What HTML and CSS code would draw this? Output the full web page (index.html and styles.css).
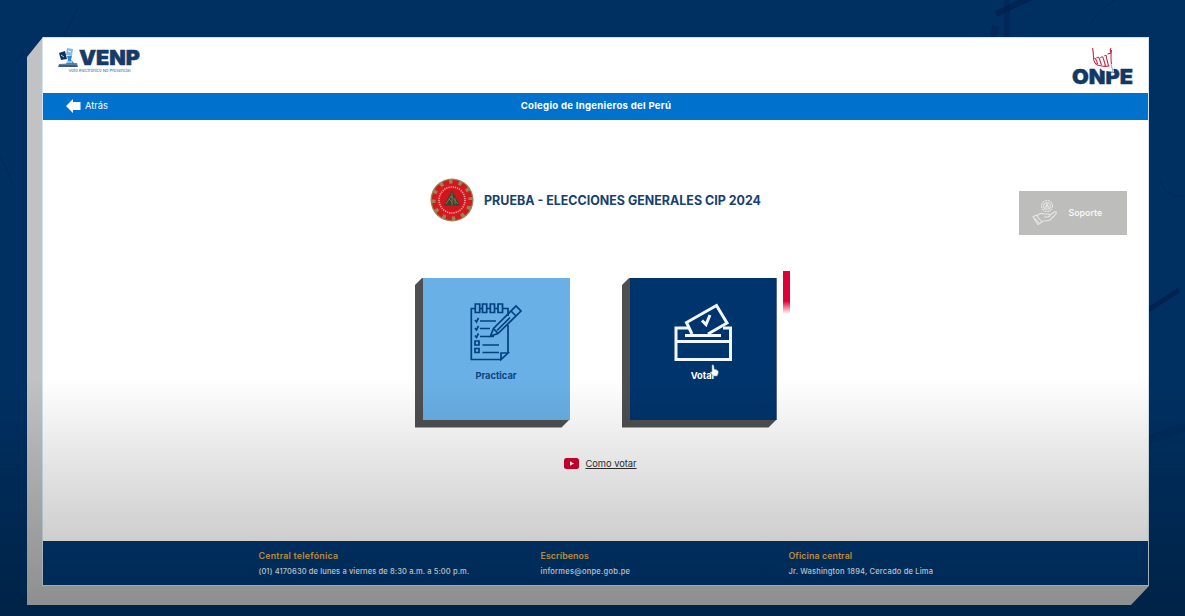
FILE: index.html
```html
<!DOCTYPE html>
<html lang="es">
<head>
<meta charset="utf-8">
<title>VENP - ONPE</title>
<link rel="stylesheet" href="styles.css">
</head>
<body>
<svg class="backdrop" viewBox="0 0 1185 616" aria-hidden="true">
  <g fill="none" stroke="#001d4b">
    <path d="M996 14L1044-9" stroke-width="6" opacity=".6"/>
    <path d="M1007 0V37" stroke-width="6" opacity=".35"/>
    <path d="M993 37L996 26" stroke-width="7" opacity=".4"/>
    <path d="M1090 24Q1101 9 1115 0" stroke-width="2" opacity=".3"/>
    <path d="M1148 310L1179 290" stroke-width="5" opacity=".75"/>
    <path d="M1149 440L1185 427" stroke-width="9" opacity=".2"/>
    <path d="M1160 180Q1166 198 1185 196" stroke-width="2" opacity=".2"/>
    <path d="M0 157Q7 168 12 184M14 62L25 53M64 35L78 7" stroke-width="2" opacity=".25"/>
  </g>
</svg>
<div class="frame">
  <div class="screen">
    <header class="header">
      <svg class="venp" viewBox="0 0 84 30" role="img" aria-label="VENP">
        <path d="M1 17L19 16L20 20H0Z" fill="#5f7fa5"/>
        <path d="M1 19H19" stroke="#173b69"/>
        <path d="M1 6L7 4L9 12L3 13Z" fill="#12305c"/>
        <path d="M3 8L6 10" stroke="#a8cdeb"/>
        <path d="M9 1L15 2L14 9L8 8Z" fill="#82bdea"/>
        <path d="M10 4L13 5" stroke="#fff"/>
        <path d="M9 9H14L13 13L17 17H8L10 13Z" fill="#2f86cc"/>
        <path d="M9 15H14" stroke="#fff"/>
        <text class="venp-name" x="21" y="17.800" textLength="61" lengthAdjust="spacingAndGlyphs">VENP</text>
        <text class="venp-sub" x="10.500" y="25.300" textLength="62" lengthAdjust="spacingAndGlyphs">Voto Electrónico No Presencial</text>
      </svg>
      <svg class="onpe" viewBox="0 0 66 46" role="img" aria-label="ONPE">
        <text class="onpe-name" x="2" y="36.800" textLength="61" lengthAdjust="spacingAndGlyphs">ONPE</text>
        <path d="M30 20L43 19L44 25L32 23.500Z" fill="#fff"/>
        <path d="M22.500 1Q23.500 5 23.500 10Q23.500 16 27.500 18M24.500 11Q26.500 12 27.500 17M26.500 11Q28.500 9 29.500 12L31.500 18M30.500 11Q32.500 8 33.500 12L35.500 19M34.500 9Q36.500 7 36.500 11L38.500 19M37.500 7L41 6Q39.500 3 41 1M41.500 3Q40.500 12 41.500 17M27.500 18Q33.500 20 39.500 19" fill="none" stroke="#c82c4b" stroke-width="1.1"/>
        <path d="M41 17L43 25" stroke="#9ba9b9"/>
      </svg>
    </header>
    <nav class="bar">
      <a class="back">
        <svg class="arrow" viewBox="0 0 15 14"><path d="M0 7L7 0V3H14.500V11H7V14Z" fill="#fff"/></svg>
        <span>Atrás</span>
      </a>
      <span class="org">Colegio de Ingenieros del Perú</span>
    </nav>
    <main class="main">
      <section class="center">
        <div class="title">
          <svg class="crest" viewBox="0 0 44 44">
            <circle cx="22" cy="22" r="21.500" fill="#9a8456"/>
            <circle cx="22" cy="22" r="18" fill="none" stroke="#cf1a20" stroke-width="4.500" stroke-dasharray="6 3.425"/>
            <circle cx="22" cy="22" r="16.500" fill="#d81820"/>
            <circle cx="22" cy="22" r="13" fill="none" stroke="#f0a6a0" stroke-width="1.600" stroke-dasharray="1.200 1"/>
            <circle cx="22" cy="22" r="11" fill="#cc171c"/>
            <path d="M22 12.500L30 27.500H14Z" fill="#3c4136"/>
            <path d="M22 15V27M19 21L22 24M25 20V26M16 26L21 18L28 26" fill="none" stroke="#8d8a5c" stroke-width=".7"/>
          </svg>
          <h1>PRUEBA - ELECCIONES GENERALES CIP 2024</h1>
        </div>
        <div class="cards">
          <a class="card"><div class="face light">
            <svg class="icon" viewBox="0 0 54 60" fill="none" stroke="#00417e" stroke-width="1.700">
              <path d="M5.300 5.500H1.300V56.500H31L38 50V22M32.500 5.500H38V13M9.700 5.500H12.500M16.700 5.500H20.300M24.500 5.500H28M31 56.500V50H38Z"/>
              <path d="M5.300 1H9.700V9.500H5.300ZM12.500 1H16.700V9.500H12.500ZM20.300 1H24.500V9.500H20.300ZM28 1H32.500V9.500H28Z"/>
              <path d="M5 17L6.500 19L8.500 15M5 25L6.500 27L8.500 23M5 32.500L6.500 34.500L8.500 30.500M10 18H26M10 25.500H20M10 33.500H24M5 38H9V42H5ZM5 45.500H9V49.500H5ZM12.500 42H29M12.500 49.500H29"/>
              <path d="M20.500 33L23.500 25.500L46 3L51 8L28 30.500ZM23.500 25.500L28 30.500M41 8L46 13M27 27.500L40 14.500"/>
            </svg>
            <span>Practicar</span></div></a>
          <a class="card"><div class="face dark">
            <svg class="icon vote" viewBox="0 0 58 60" fill="none" stroke="#eff7ff" stroke-width="3">
              <path d="M18 31L12.500 19.500L42.500 2.500L53 20L34 31"/>
              <path d="M14 25H2V56.500H56.500V25H49M2 38.500H56.500M11 32.500H47"/>
              <path d="M28 17.500L32 21.500L36 12"/>
            </svg>
            <span>Votar</span>
            <svg class="cursor" viewBox="0 0 9 13"><path d="M2 1Q3 0 4 2V5L7 6Q9 7 8 10L7 12H3L0 8L2 8Z" fill="#fff" stroke="#8095ad" stroke-width=".6"/></svg>
          </div></a>
          <i class="marker"></i>
        </div>
        <a class="how">
          <svg class="play" viewBox="0 0 15 11"><rect width="15" height="11" rx="2.500" fill="#d4002f"/><path d="M6 3.300L10 5.500L6 7.700Z" fill="#fff"/></svg>
          <span>Como votar</span>
        </a>
      </section>
      <a class="support">
        <svg class="hand" viewBox="0 0 26 27" fill="none" stroke="#e6e6e6" stroke-width="1.100">
          <circle cx="15" cy="7" r="5.500" stroke-dasharray="2.200 .7"/><circle cx="15" cy="7" r="3.300"/><path d="M13.500 8L15 5L16.500 8Z"/>
          <path d="M1 18L4 16L10 23L6 25.500ZM5 17Q8 13 12 15H17Q19 17 16 18H12M17 17L22 13Q25 12 24 15L18 21Q16 22 10 22M2.500 19L7 24"/>
        </svg>
        <span>Soporte</span>
      </a>
    </main>
    <footer class="footer">
      <div class="col tel"><h2>Central telefónica</h2><p>(01) 4170630 de lunes a viernes de 8:30 a.m. a 5:00 p.m.</p></div>
      <div class="col mail"><h2>Escríbenos</h2><p>informes@onpe.gob.pe</p></div>
      <div class="col office"><h2>Oficina central</h2><p>Jr. Washington 1894, Cercado de Lima</p></div>
    </footer>
  </div>
</div>
<div class="shade"></div>
</body>
</html>
```
FILE: styles.css
```css
* { box-sizing: border-box; }
body {
  margin: 0;
  height: 616px;
  overflow: hidden;
  padding: 37px 36px 11px 27px;
  background: #003062;
  font-family: Inter, "Open Sans", sans-serif;
  position: relative;
}
svg { display: block; flex: none; }
.backdrop { position: absolute; inset: 0; width: 1185px; height: 616px; }
.frame {
  position: relative;
  height: 568px;
  padding: 1px 1px 20px 16px;
  background: #c1c2c3;
  clip-path: polygon(16px 0, 100% 0, 100% 549px, 1104px 100%, 0 100%, 0 20px);
}
.screen {
  height: 547px;
  display: flex;
  flex-direction: column;
  background: #fff;
  box-shadow: 0 0 0 1px #d3e3ef;
}
.header {
  height: 55px;
  display: flex;
  justify-content: space-between;
  padding: 9px 12px 0 15px;
}
.venp { width: 84px; height: 30px; }
.venp-name { font: 900 20px Inter, sans-serif; fill: #173b69; stroke: #173b69; stroke-width: .5; }
.venp-sub { font: 500 3.800px Inter, sans-serif; fill: #4d83ac; }
.onpe { width: 66px; height: 46px; }
.onpe-name { font: 900 20px Inter, sans-serif; fill: #123965; stroke: #123965; stroke-width: .4; }
.bar {
  height: 26.500px;
  display: grid;
  grid-template-columns: 1fr auto 1fr;
  align-items: center;
  padding: 0 22px 1px 23px;
  background: #0072ce;
  color: #fff;
}
.back { display: flex; align-items: center; gap: 4px; font-size: 9.300px; }
.arrow { width: 15px; height: 14px; }
.org { font-size: 9.600px; font-weight: 700; letter-spacing: .27px; white-space: nowrap; }
.main {
  flex: 1;
  display: grid;
  grid-template-columns: 1fr 362px 1fr;
}
.center {
  grid-column: 2;
  display: flex;
  flex-direction: column;
  align-items: center;
  padding-top: 58.500px;
}
.title { display: flex; align-items: center; gap: 10px; height: 44px; }
.crest { width: 44px; height: 44px; }
h1 { margin: 0; font-size: 12.450px; font-weight: 700; color: #173f73; white-space: nowrap; }
.cards { display: flex; gap: 52px; margin-top: 55.500px; position: relative; }
.card {
  width: 155px;
  height: 150px;
  padding: 0 0 8px 8px;
  background: #4e4f50;
  clip-path: polygon(8px 0, 100% 0, 100% 142px, 147px 100%, 0 100%, 0 8px);
}
.face {
  height: 142px;
  display: flex;
  flex-direction: column;
  align-items: center;
  gap: 7px;
  padding-top: 25.500px;
  font-size: 9.300px;
  font-weight: 700;
  position: relative;
}
.light { background: #69b0e6; color: #0c447f; }
.dark { background: #00346c; color: #fff; }
.icon { width: 54px; height: 60px; }
.light .icon { margin-left: 2px; }
.vote { width: 58px; }
.cursor { position: absolute; left: 80px; top: 86px; width: 9px; height: 13px; }
.marker {
  position: absolute;
  left: 368px;
  top: -7px;
  width: 7px;
  height: 43px;
  background: linear-gradient(#dd0034 70%, rgba(221, 0, 52, 0));
}
.how {
  display: flex;
  align-items: center;
  gap: 6px;
  margin: 30px 0 0 10px;
  font-size: 9.300px;
  color: #303030;
  text-decoration: underline;
}
.play { width: 15px; height: 11px; }
.support {
  justify-self: end;
  display: flex;
  align-items: center;
  gap: 11px;
  width: 108px;
  height: 43.500px;
  margin: 71.500px 21.500px 0 0;
  padding-left: 13px;
  background: #bdbdbc;
  color: #f6f6f6;
  font-size: 8.800px;
  font-weight: 600;
}
.hand { width: 26px; height: 27px; }
.footer {
  height: 44px;
  display: grid;
  grid-template-columns: 282px 248px 1fr;
  padding: 9px 0 0 215.500px;
  background: #003873;
  color: #eef5fb;
}
h2, p { margin: 0; white-space: nowrap; }
h2 { font-size: 8.800px; line-height: 12px; font-weight: 600; color: #e8ad45; letter-spacing: .1px; }
.tel h2 { letter-spacing: .24px; }
p { font-size: 7.500px; line-height: 12px; margin-top: 4px; font-weight: 500; letter-spacing: .2px; }
.tel p { letter-spacing: .13px; }
.mail p { letter-spacing: .26px; }
.shade {
  position: absolute;
  inset: 378px 0 0;
  background: linear-gradient(rgba(0, 0, 0, 0), rgba(0, 0, 0, .1) 35%, rgba(0, 0, 0, .28));
  pointer-events: none;
}
```
